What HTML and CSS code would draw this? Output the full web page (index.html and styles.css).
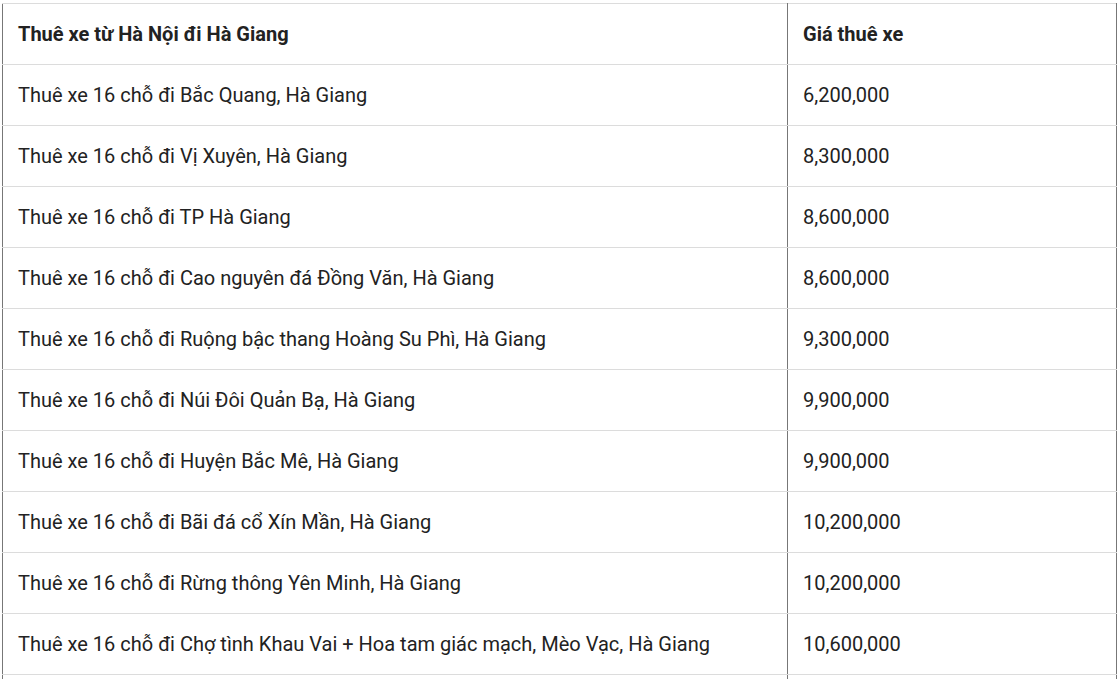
FILE: index.html
```html
<!DOCTYPE html>
<html lang="vi">
<head>
<meta charset="utf-8">
<link rel="stylesheet" href="styles.css">
</head>
<body>
<div class="wrap">
<table class="price-table">
  <colgroup><col class="col-name"><col class="col-price"></colgroup>
  <thead>
    <tr><th>Thuê xe từ Hà Nội đi Hà Giang</th><th>Giá thuê xe</th></tr>
  </thead>
  <tbody>
    <tr><td>Thuê xe 16 chỗ đi Bắc Quang, Hà Giang</td><td>6,200,000</td></tr>
    <tr><td>Thuê xe 16 chỗ đi Vị Xuyên, Hà Giang</td><td>8,300,000</td></tr>
    <tr><td>Thuê xe 16 chỗ đi TP Hà Giang</td><td>8,600,000</td></tr>
    <tr><td>Thuê xe 16 chỗ đi Cao nguyên đá Đồng Văn, Hà Giang</td><td>8,600,000</td></tr>
    <tr><td>Thuê xe 16 chỗ đi Ruộng bậc thang Hoàng Su Phì, Hà Giang</td><td>9,300,000</td></tr>
    <tr><td>Thuê xe 16 chỗ đi Núi Đôi Quản Bạ, Hà Giang</td><td>9,900,000</td></tr>
    <tr><td>Thuê xe 16 chỗ đi Huyện Bắc Mê, Hà Giang</td><td>9,900,000</td></tr>
    <tr><td>Thuê xe 16 chỗ đi Bãi đá cổ Xín Mần, Hà Giang</td><td>10,200,000</td></tr>
    <tr><td>Thuê xe 16 chỗ đi Rừng thông Yên Minh, Hà Giang</td><td>10,200,000</td></tr>
    <tr><td>Thuê xe 16 chỗ đi Chợ tình Khau Vai + Hoa tam giác mạch, Mèo Vạc, Hà Giang</td><td>10,600,000</td></tr>
    <tr><td></td><td></td></tr>
  </tbody>
</table>
</div>
</body>
</html>
```
FILE: styles.css
```css
html, body {
  margin: 0;
  padding: 0;
  background: #fff;
}
body {
  font-family: Roboto, "Liberation Sans", Arial, sans-serif;
  color: #222;
  overflow: hidden;
}
.wrap {
  padding: 3px 0 0 2px;
}
.price-table {
  border-collapse: collapse;
  width: 1115px;
  table-layout: fixed;
  font-size: 20px;
}
.col-name { width: 785px; }
.price-table th,
.price-table td {
  height: 61px;
  padding: 0 15px;
  text-align: left;
  vertical-align: middle;
  border-top: 1px solid #dcdcdc;
  border-bottom: 1px solid #dcdcdc;
  border-left: 1px solid #777;
  border-right: 1px solid #777;
  box-sizing: border-box;
  white-space: nowrap;
}
.price-table th {
  font-weight: 700;
}
.price-table td {
  font-weight: 400;
}
```
